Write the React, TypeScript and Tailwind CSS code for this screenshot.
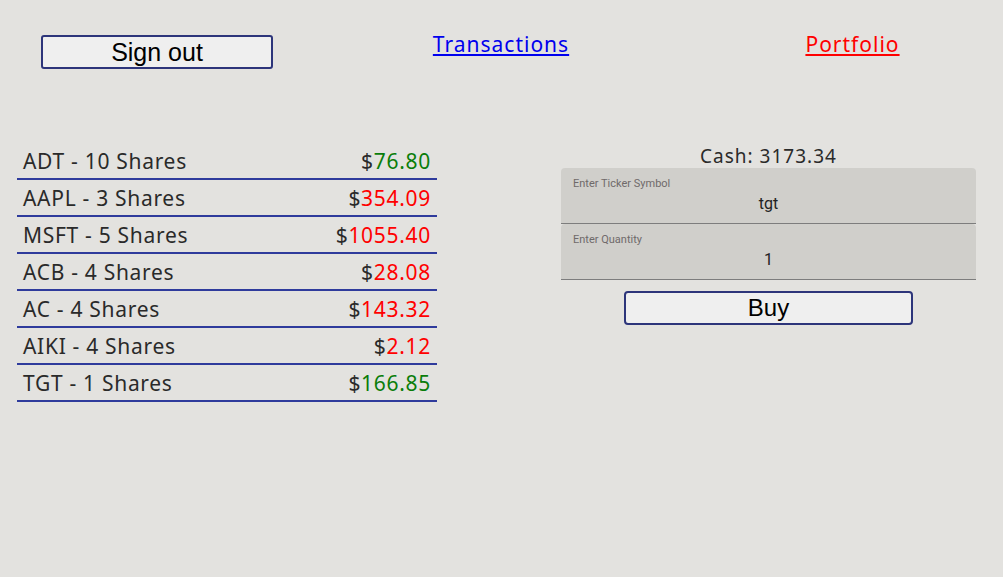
const holdings = [
  { name: "ADT - 10 Shares", price: "76.80", up: true },
  { name: "AAPL - 3 Shares", price: "354.09", up: false },
  { name: "MSFT - 5 Shares", price: "1055.40", up: false },
  { name: "ACB - 4 Shares", price: "28.08", up: false },
  { name: "AC - 4 Shares", price: "143.32", up: false },
  { name: "AIKI - 4 Shares", price: "2.12", up: false },
  { name: "TGT - 1 Shares", price: "166.85", up: true },
];

const nice = { fontFamily: "'Noto Sans', 'Open Sans', sans-serif" };

export default function App() {
  return (
    <div className="w-[1003px] h-[577px] bg-[#e3e2df] text-[#2a2a2a] overflow-hidden" style={nice}>
      <div className="flex items-start pt-[35px]">
        <div className="w-[334px] pl-[41px]">
          <button
            className="w-[232px] h-[34px] bg-[#efefef] border-2 border-[#2d357a] rounded-[3px] text-[25px] leading-none text-black"
            style={{ fontFamily: "'Liberation Sans', Arial, sans-serif" }}
          >
            Sign out
          </button>
        </div>
        <div className="w-[334px] flex justify-center -mt-[6px]">
          <a href="#" className="text-[21px] tracking-[1px] text-[#0000ee] underline">
            Transactions
          </a>
        </div>
        <div className="w-[335px] flex justify-center -mt-[6px]">
          <a href="#" className="text-[21px] tracking-[1px] text-[#ff0000] underline pl-[34px]">
            Portfolio
          </a>
        </div>
      </div>

      <div className="flex items-start mt-[73px]">
        <div className="w-[420px] ml-[17px] mt-[1px]">
          {holdings.map((h) => (
            <div
              key={h.name}
              className="h-[37px] flex items-end justify-between px-[6px] pb-[1px] border-b-2 border-[#2f3b9c] text-[21px] leading-[32px] tracking-[0.7px]"
            >
              <span>{h.name}</span>
              <span>
                ${""}
                <span className={h.up ? "text-[#0a7d0a]" : "text-[#ff0000]"}>{h.price}</span>
              </span>
            </div>
          ))}
        </div>

        <div className="w-[415px] ml-[124px] flex flex-col items-center">
          <div className="text-[19px] leading-[24px] mt-[2px] tracking-[1px]">Cash: 3173.34</div>
          <div className="w-full" style={{ fontFamily: "Roboto, sans-serif" }}>
            <div className="h-[56px] bg-[#d0cfcb] rounded-t-[4px] border-b border-[#7d7d7d] px-[12px] pt-[9px]">
              <div className="text-[11px] leading-[13px] text-[#6f6a6a]">Enter Ticker Symbol</div>
              <div className="text-[16px] leading-[20px] text-center mt-[4px] text-[#222]">tgt</div>
            </div>
            <div className="h-[56px] bg-[#d0cfcb] rounded-t-[4px] border-b border-[#7d7d7d] px-[12px] pt-[9px]">
              <div className="text-[11px] leading-[13px] text-[#6f6a6a]">Enter Quantity</div>
              <div className="text-[16px] leading-[20px] text-center mt-[4px] text-[#222]">1</div>
            </div>
          </div>
          <button
            className="mt-[11px] w-[289px] h-[34px] bg-[#efefef] border-2 border-[#2d357a] rounded-[4px] text-[24px] leading-none text-black"
            style={{ fontFamily: "'Liberation Sans', Arial, sans-serif" }}
          >
            Buy
          </button>
        </div>
      </div>
    </div>
  );
}
